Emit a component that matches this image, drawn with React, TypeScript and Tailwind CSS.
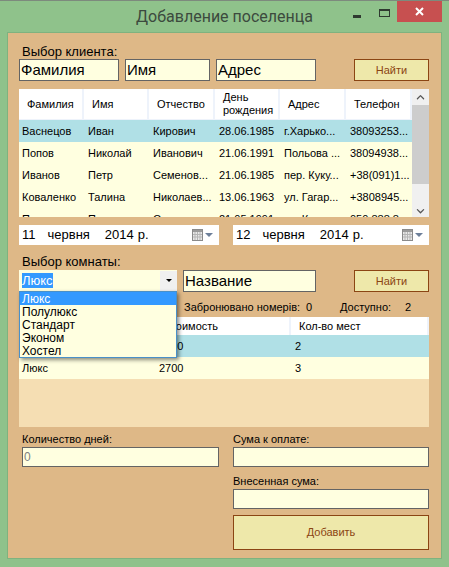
import { ChevronDown, ChevronUp } from "lucide-react";

const clients = [
  ["Васнецов", "Иван", "Кирович", "28.06.1985", "г.Харько...", "38093253..."],
  ["Попов", "Николай", "Иванович", "21.06.1991", "Польова ...", "38094938..."],
  ["Иванов", "Петр", "Семенов...", "21.06.1985", "пер. Куку...", "+38(091)1..."],
  ["Коваленко", "Талина", "Николаев...", "13.06.1963", "ул. Гагар...", "+3808945..."],
  ["Петров", "Петр", "Семенов...", "21.05.1991", "ул. Киев...", "050 888 8..."],
];

const clientHeaders = ["Фамилия", "Имя", "Отчество", "День рождения", "Адрес", "Телефон"];
const clientGrid = "grid grid-cols-[65px_65px_66px_65px_66px_66px]";
const roomGrid = "grid grid-cols-[136px_136px_138px]";

function Field({ text, className = "" }: { text?: string; className?: string }) {
  return (
    <div className={`h-[22px] bg-[#ffffe0] border border-[#646464] pl-[1px] text-[15px] leading-[19px] text-black ${className}`}>
      {text}
    </div>
  );
}

function SmallField({ text }: { text?: string }) {
  return (
    <div className="h-[20px] bg-[#ffffe0] border border-[#646464] pl-[1px] text-[12px] leading-[18px] text-[#808080]">
      {text}
    </div>
  );
}

function FindButton() {
  return (
    <button className="w-[75px] h-[22px] bg-[#eee8aa] border border-[#8b4513] text-[11px] text-[#8b4513]">
      Найти
    </button>
  );
}

function CalendarIcon() {
  return (
    <div className="flex items-center gap-[2px]">
      <svg width="11" height="12" viewBox="0 0 11 12">
        <rect x="0.5" y="0.5" width="10" height="11" fill="#e8e8e8" stroke="#8a8a8a" />
        <rect x="1" y="1" width="9" height="2" fill="#9a9a9a" />
        <path d="M3 3v8M5.500 3v8M8 3v8M1 5.500h9M1 8h9" stroke="#b5b5b5" strokeWidth="1" />
      </svg>
      <div className="w-0 h-0 border-x-[4px] border-x-transparent border-t-[4px] border-t-[#6d7f99]" />
    </div>
  );
}

function DatePicker({ day, className }: { day: string; className: string }) {
  return (
    <div className={`h-[20px] bg-white flex items-center justify-between pl-[3px] pr-[6px] text-[13px] text-black ${className}`}>
      <div className="flex">
        <span>{day}</span>
        <span className="ml-[12px]">червня</span>
        <span className="ml-[15px]">2014</span>
        <span className="ml-[4px]">р.</span>
      </div>
      <CalendarIcon />
    </div>
  );
}

function App() {
  return (
    <div className="w-[449px] h-[567px] flex flex-col bg-[#8fc28b] border-t border-[#7d8a7d] font-['Liberation_Sans',sans-serif] overflow-hidden">
      {/* Title bar */}
      <div className="h-[31px] grid grid-cols-[1fr_auto_1fr] shrink-0">
        <div />
        <div className="pt-[4px] text-[16px] leading-[24px] text-[#3c4a3e] font-['Roboto',sans-serif]">
          Добавление поселенца
        </div>
        <div className="flex justify-end items-start pr-[7px]">
          <div className="w-[8px] h-[3px] bg-[#2f3a30] mt-[14px] mr-[18px]" />
          <div className="w-[11px] h-[8px] border border-[#2f3a30] border-t-[2px] mt-[8px] mr-[7px]" />
          <div className="w-[45px] h-[21px] bg-[#c75050] flex items-center justify-center">
            <svg width="9" height="9" viewBox="0 0 9 9">
              <path d="M1 1l7 7M8 1l-7 7" stroke="#fff" strokeWidth="2" />
            </svg>
          </div>
        </div>
      </div>

      {/* Form panel */}
      <div className="ml-[7px] w-[435px] h-[527px] bg-[#deb887] border border-[#7fb27f] pl-[11px] pr-[12px] flex flex-col text-[13px] text-black">
        <div className="mt-[11px] h-[15px] ml-[3px] leading-[15px]">Выбор клиента:</div>
        <div className="flex">
          <Field text="Фамилия" className="w-[100px]" />
          <Field text="Имя" className="w-[85px] ml-[6px]" />
          <Field text="Адрес" className="w-[100px] ml-[6px]" />
          <div className="ml-[38px]">
            <FindButton />
          </div>
        </div>

        {/* Clients table */}
        <div className="mt-[8px] h-[128px] flex bg-[#f5deb3] overflow-hidden text-[11px] shrink-0">
          <div className="w-[393px] shrink-0">
            <div className={`${clientGrid} h-[31px] bg-white border-b border-[#eef3fb]`}>
              {clientHeaders.map((h) => (
                <div key={h} className="flex items-center pl-[8px] leading-[13px] border-r-2 border-[#eef3fb]">
                  {h}
                </div>
              ))}
            </div>
            {clients.map((row, i) => (
              <div key={row[0]} className={`${clientGrid} h-[22px] items-center ${i === 0 ? "bg-[#b0e0e6]" : "bg-[#ffffe0]"}`}>
                {row.map((cell) => (
                  <div key={cell} className="pl-[4px] first:pl-[3px] whitespace-nowrap overflow-hidden">
                    {cell}
                  </div>
                ))}
              </div>
            ))}
          </div>
          <div className="w-[17px] bg-[#f0f0f0] flex flex-col items-center">
            <ChevronUp size={13} strokeWidth={2.5} className="text-[#555] mt-[2px] mb-[2px]" />
            <div className="w-[17px] h-[82px] bg-[#cdcdcd]" />
            <ChevronDown size={13} strokeWidth={2.5} className="text-[#555] mt-[21px]" />
          </div>
        </div>

        {/* Dates */}
        <div className="mt-[8px] flex justify-between">
          <DatePicker day="11" className="w-[200px]" />
          <DatePicker day="12" className="w-[196px]" />
        </div>

        <div className="mt-[9px] h-[15px] ml-[3px] leading-[15px]">Выбор комнаты:</div>
        <div className="mt-[1px] relative flex">
          <div className="w-[158px] h-[21px] bg-[#ffffe0] flex items-center justify-between pl-[3px] text-[13px]">
            <span className="bg-[#3399ff] text-white leading-[15px]">Люкс</span>
            <div className="w-[17px] h-[20px] bg-[#f0f0f0] flex items-center justify-center">
              <div className="w-0 h-0 border-x-[3px] border-x-transparent border-t-[3px] border-t-black" />
            </div>
          </div>
          <Field text="Название" className="w-[133px] ml-[6px]" />
          <div className="ml-[38px]">
            <FindButton />
          </div>

          {/* Open combo list */}
          <div className="absolute left-0 top-[21px] z-10 w-[158px] h-[67px] bg-[#ffffe0] border border-[#4a90c8] shadow-[2px_2px_4px_rgba(0,0,0,0.45)] text-[12px]">
            <div className="h-[13px] leading-[15px] bg-[#3399ff] text-white pl-[2px]">Люкс</div>
            <div className="h-[13px] leading-[15px] pl-[2px]">Полулюкс</div>
            <div className="h-[13px] leading-[15px] pl-[2px]">Стандарт</div>
            <div className="h-[13px] leading-[15px] pl-[2px]">Эконом</div>
            <div className="h-[13px] leading-[15px] pl-[2px]">Хостел</div>
          </div>
        </div>

        {/* Counters */}
        <div className="mt-[8px] h-[17px] flex text-[11px] leading-[15px] pl-[165px]">
          <span className="w-[122px]">Забронювано номерів:</span>
          <span className="w-[34px]">0</span>
          <span className="w-[65px]">Доступно:</span>
          <span>2</span>
        </div>

        {/* Rooms table */}
        <div className="h-[110px] bg-[#f5deb3] text-[11px] shrink-0">
          <div className={`${roomGrid} h-[18px] bg-white`}>
            {["Название", "Стоимость", "Кол-во мест"].map((h) => (
              <div key={h} className="flex items-center pl-[8px] border-r-2 border-[#eef3fb]">
                {h}
              </div>
            ))}
          </div>
          {[
            ["Люкс", "2000", "2"],
            ["Люкс", "2700", "3"],
          ].map((row, i) => (
            <div key={row[1]} className={`${roomGrid} h-[22px] items-center ${i === 0 ? "bg-[#b0e0e6]" : "bg-[#ffffe0]"}`}>
              {row.map((cell) => (
                <div key={cell} className="pl-[4px] first:pl-[3px]">
                  {cell}
                </div>
              ))}
            </div>
          ))}
        </div>

        {/* Totals */}
        <div className="mt-[4px] grid grid-cols-[200px_196px] justify-between text-[11px]">
          <div className="pl-[3px]">
            <div className="h-[16px] leading-[16px]">Количество дней:</div>
            <SmallField text="0" />
          </div>
          <div>
            <div className="h-[16px] leading-[16px]">Сума к оплате:</div>
            <SmallField />
            <div className="h-[16px] mt-[6px] leading-[16px]">Внесенная сума:</div>
            <SmallField />
            <button className="mt-[6px] w-full h-[35px] bg-[#eee8aa] border border-[#8b4513] text-[11px] text-[#8b4513]">
              Добавить
            </button>
          </div>
        </div>
      </div>
    </div>
  );
}

export default App;
